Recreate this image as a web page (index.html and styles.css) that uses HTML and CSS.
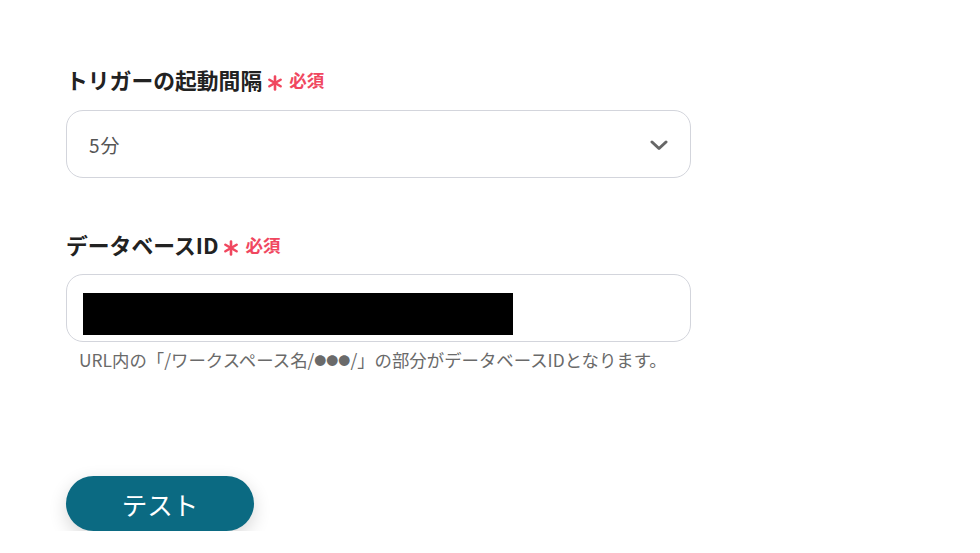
FILE: index.html
```html
<!DOCTYPE html>
<html lang="ja">
<head>
<meta charset="utf-8">
<link rel="stylesheet" href="styles.css">
</head>
<body>
<div class="page">
  <div class="field field-first">
    <div class="label">トリガーの起動間隔<span class="req"><svg class="ast" viewBox="0 0 16 16" width="16" height="16"><g stroke="#f0475f" stroke-width="2.6" stroke-linecap="round"><line x1="8" y1="1.5" x2="8" y2="14.5"/><line x1="2.4" y1="4.75" x2="13.6" y2="11.25"/><line x1="2.4" y1="11.25" x2="13.6" y2="4.75"/></g></svg>必須</span></div>
    <div class="box select">
      <span class="value">5分</span>
      <svg class="chev" viewBox="0 0 18 11" width="18" height="11"><polyline points="2,2 9,8.5 16,2" fill="none" stroke="#666" stroke-width="3" stroke-linecap="round" stroke-linejoin="round"/></svg>
    </div>
  </div>
  <div class="field field-second">
    <div class="label">データベースID<span class="req"><svg class="ast" viewBox="0 0 16 16" width="16" height="16"><g stroke="#f0475f" stroke-width="2.6" stroke-linecap="round"><line x1="8" y1="1.5" x2="8" y2="14.5"/><line x1="2.4" y1="4.75" x2="13.6" y2="11.25"/><line x1="2.4" y1="11.25" x2="13.6" y2="4.75"/></g></svg>必須</span></div>
    <div class="box input">
      <div class="redact"></div>
    </div>
    <p class="help">URL内の「/ワークスペース名/<span class="dots">●●●</span>/」の部分がデータベースIDとなります。</p>
  </div>
  <button class="btn">テスト</button>
</div>
</body>
</html>
```
FILE: styles.css
```css
html, body {
  margin: 0;
  padding: 0;
  background: #ffffff;
}
body {
  font-family: "Noto Sans CJK JP", "Noto Sans", sans-serif;
  color: #222;
}
.page {
  padding: 65px 0 0 66px;
  width: 625px;
}
.label {
  font-size: 21.8px;
  font-weight: 700;
  line-height: 30px;
  height: 30px;
  color: #222;
  display: flex;
  align-items: center;
}
.req {
  display: inline-flex;
  align-items: center;
  color: #f0475f;
  font-size: 17.5px;
  font-weight: 700;
  margin-left: 5px;
}
.ast {
  margin-right: 6px;
  margin-top: 6px;
}
.box {
  box-sizing: border-box;
  height: 68px;
  border: 1px solid #d3d5dc;
  border-radius: 17px;
  background: #fff;
}
.field-first .label {
  margin-bottom: 15px;
}
.select {
  display: flex;
  align-items: center;
  justify-content: space-between;
  padding: 0 22px 0 22px;
}
.value {
  font-size: 19px;
  color: #555;
  letter-spacing: 1px;
}
.chev {
  margin-top: 2px;
}
.field-second {
  margin-top: 52px;
}
.field-second .label {
  margin-bottom: 14px;
}
.input {
  padding: 18px 0 0 16px;
}
.redact {
  width: 430px;
  height: 42px;
  background: #000;
}
.help {
  margin: 6px 0 0 13px;
  font-size: 17.4px;
  line-height: 24px;
  color: #6a6a6a;
}
.dots {
  font-size: 12px;
  vertical-align: 1px;
}
.btn {
  margin-top: 103px;
  width: 188px;
  height: 55px;
  border: none;
  border-radius: 28px;
  background: #0b6a82;
  color: #fff;
  font-family: "Noto Sans CJK JP", sans-serif;
  font-size: 25.5px;
  font-weight: 400;
  box-shadow: 0 6px 18px rgba(0, 0, 0, 0.16);
  padding: 0;
}
```
